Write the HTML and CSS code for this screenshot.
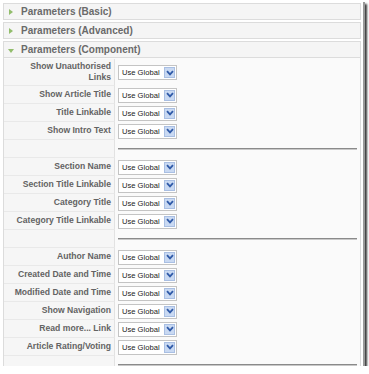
FILE: index.html
```html
<!DOCTYPE html>
<html lang="en">
<head>
    <meta charset="UTF-8">
    <title>Parameters</title>
    <link rel="stylesheet" href="styles.css">
</head>
<body>
    <div class="frame">
        <div class="toggler"><span class="arrow-right"></span>Parameters (Basic)</div>
        <div class="toggler"><span class="arrow-right"></span>Parameters (Advanced)</div>
        <div class="toggler open"><span class="arrow-down"></span>Parameters (Component)</div>

        <div class="pane">
            <div class="paramlist">
                <div class="key tall">Show Unauthorised<br>Links</div>
                <div class="value tall"><span class="select"><span class="label">Use Global</span><span class="drop"><svg width="8" height="6" viewBox="0 0 8 6"><path d="M1 1.2 L4 4.4 L7 1.2" fill="none" stroke="#2f5aa8" stroke-width="1.8"/></svg></span></span></div>

                <div class="key">Show Article Title</div>
                <div class="value"><span class="select"><span class="label">Use Global</span><span class="drop"><svg width="8" height="6" viewBox="0 0 8 6"><path d="M1 1.2 L4 4.4 L7 1.2" fill="none" stroke="#2f5aa8" stroke-width="1.8"/></svg></span></span></div>

                <div class="key">Title Linkable</div>
                <div class="value"><span class="select"><span class="label">Use Global</span><span class="drop"><svg width="8" height="6" viewBox="0 0 8 6"><path d="M1 1.2 L4 4.4 L7 1.2" fill="none" stroke="#2f5aa8" stroke-width="1.8"/></svg></span></span></div>

                <div class="key">Show Intro Text</div>
                <div class="value"><span class="select"><span class="label">Use Global</span><span class="drop"><svg width="8" height="6" viewBox="0 0 8 6"><path d="M1 1.2 L4 4.4 L7 1.2" fill="none" stroke="#2f5aa8" stroke-width="1.8"/></svg></span></span></div>

                <div class="key"></div>
                <div class="value"><hr></div>

                <div class="key">Section Name</div>
                <div class="value"><span class="select"><span class="label">Use Global</span><span class="drop"><svg width="8" height="6" viewBox="0 0 8 6"><path d="M1 1.2 L4 4.4 L7 1.2" fill="none" stroke="#2f5aa8" stroke-width="1.8"/></svg></span></span></div>

                <div class="key">Section Title Linkable</div>
                <div class="value"><span class="select"><span class="label">Use Global</span><span class="drop"><svg width="8" height="6" viewBox="0 0 8 6"><path d="M1 1.2 L4 4.4 L7 1.2" fill="none" stroke="#2f5aa8" stroke-width="1.8"/></svg></span></span></div>

                <div class="key">Category Title</div>
                <div class="value"><span class="select"><span class="label">Use Global</span><span class="drop"><svg width="8" height="6" viewBox="0 0 8 6"><path d="M1 1.2 L4 4.4 L7 1.2" fill="none" stroke="#2f5aa8" stroke-width="1.8"/></svg></span></span></div>

                <div class="key">Category Title Linkable</div>
                <div class="value"><span class="select"><span class="label">Use Global</span><span class="drop"><svg width="8" height="6" viewBox="0 0 8 6"><path d="M1 1.2 L4 4.4 L7 1.2" fill="none" stroke="#2f5aa8" stroke-width="1.8"/></svg></span></span></div>

                <div class="key"></div>
                <div class="value"><hr></div>

                <div class="key">Author Name</div>
                <div class="value"><span class="select"><span class="label">Use Global</span><span class="drop"><svg width="8" height="6" viewBox="0 0 8 6"><path d="M1 1.2 L4 4.4 L7 1.2" fill="none" stroke="#2f5aa8" stroke-width="1.8"/></svg></span></span></div>

                <div class="key">Created Date and Time</div>
                <div class="value"><span class="select"><span class="label">Use Global</span><span class="drop"><svg width="8" height="6" viewBox="0 0 8 6"><path d="M1 1.2 L4 4.4 L7 1.2" fill="none" stroke="#2f5aa8" stroke-width="1.8"/></svg></span></span></div>

                <div class="key">Modified Date and Time</div>
                <div class="value"><span class="select"><span class="label">Use Global</span><span class="drop"><svg width="8" height="6" viewBox="0 0 8 6"><path d="M1 1.2 L4 4.4 L7 1.2" fill="none" stroke="#2f5aa8" stroke-width="1.8"/></svg></span></span></div>

                <div class="key">Show Navigation</div>
                <div class="value"><span class="select"><span class="label">Use Global</span><span class="drop"><svg width="8" height="6" viewBox="0 0 8 6"><path d="M1 1.2 L4 4.4 L7 1.2" fill="none" stroke="#2f5aa8" stroke-width="1.8"/></svg></span></span></div>

                <div class="key">Read more... Link</div>
                <div class="value"><span class="select"><span class="label">Use Global</span><span class="drop"><svg width="8" height="6" viewBox="0 0 8 6"><path d="M1 1.2 L4 4.4 L7 1.2" fill="none" stroke="#2f5aa8" stroke-width="1.8"/></svg></span></span></div>

                <div class="key">Article Rating/Voting</div>
                <div class="value"><span class="select"><span class="label">Use Global</span><span class="drop"><svg width="8" height="6" viewBox="0 0 8 6"><path d="M1 1.2 L4 4.4 L7 1.2" fill="none" stroke="#2f5aa8" stroke-width="1.8"/></svg></span></span></div>

                <div class="key"></div>
                <div class="value"><hr></div>
            </div>
        </div>
    </div>
</body>
</html>
```

FILE: styles.css
```css
body {
    margin: 0;
    background-color: #fff;
    font-family: "Liberation Sans", Arial, sans-serif;
    color: #666;
}
.frame {
    width: 363px;
    height: 366px;
    box-sizing: border-box;
    padding: 3px 2px 0 3px;
    background-color: #fff;
    overflow: hidden;
    box-shadow: 2px 2px 0 #9a9a9a, 4px 4px 2px #3a3a3a;
}
.toggler {
    height: 17px;
    box-sizing: border-box;
    margin-bottom: 2px;
    padding: 2px 0 0 17px;
    background-color: #f5f5f5;
    border: 1px solid #dcdcdc;
    font-size: 10px;
    font-weight: bold;
    color: #6a6a6a;
    line-height: 12px;
    position: relative;
}
.toggler.open {
    margin-bottom: 0;
}
.arrow-right {
    position: absolute;
    left: 5px;
    top: 5px;
    width: 0;
    height: 0;
    border-top: 3px solid transparent;
    border-bottom: 3px solid transparent;
    border-left: 4px solid #92bd6c;
}
.arrow-down {
    position: absolute;
    left: 4px;
    top: 7px;
    width: 0;
    height: 0;
    border-left: 3px solid transparent;
    border-right: 3px solid transparent;
    border-top: 4px solid #92bd6c;
}
.pane {
    border-left: 1px solid #dcdcdc;
    border-right: 1px solid #dcdcdc;
    padding-top: 1px;
    background-color: #fafafa;
}
.paramlist {
    display: grid;
    grid-template-columns: 111px 1fr;
}
.key {
    height: 18px;
    box-sizing: border-box;
    padding-right: 3px;
    display: flex;
    align-items: center;
    justify-content: flex-end;
    text-align: right;
    white-space: nowrap;
    font-size: 8.6px;
    font-weight: bold;
    line-height: 11px;
    color: #636363;
    background-color: #f6f6f6;
    border-bottom: 1px solid #e9e9e9;
    border-right: 1px solid #e2e2e2;
}
.value {
    height: 18px;
    box-sizing: border-box;
    padding-left: 3px;
    padding-right: 3px;
    display: flex;
    align-items: center;
}
.key.tall, .value.tall {
    height: 27px;
}
.select {
    width: 59px;
    height: 15px;
    box-sizing: border-box;
    display: inline-flex;
    align-items: center;
    justify-content: space-between;
    padding-left: 3px;
    border: 1px solid #c4c4c4;
    background-color: #fff;
    font-size: 7.6px;
    color: #222;
}
.label {
    white-space: nowrap;
}
.drop {
    width: 11px;
    height: 11px;
    flex-shrink: 0;
    box-sizing: border-box;
    margin-right: 1px;
    display: flex;
    align-items: center;
    justify-content: center;
    background-color: #c9d9f2;
    border: 1px solid #a9bfe3;
}
hr {
    width: 100%;
    margin: 0;
    border: none;
    border-top: 1px solid #8a8a8a;
    border-bottom: 1px solid #c8c8c8;
}
```
